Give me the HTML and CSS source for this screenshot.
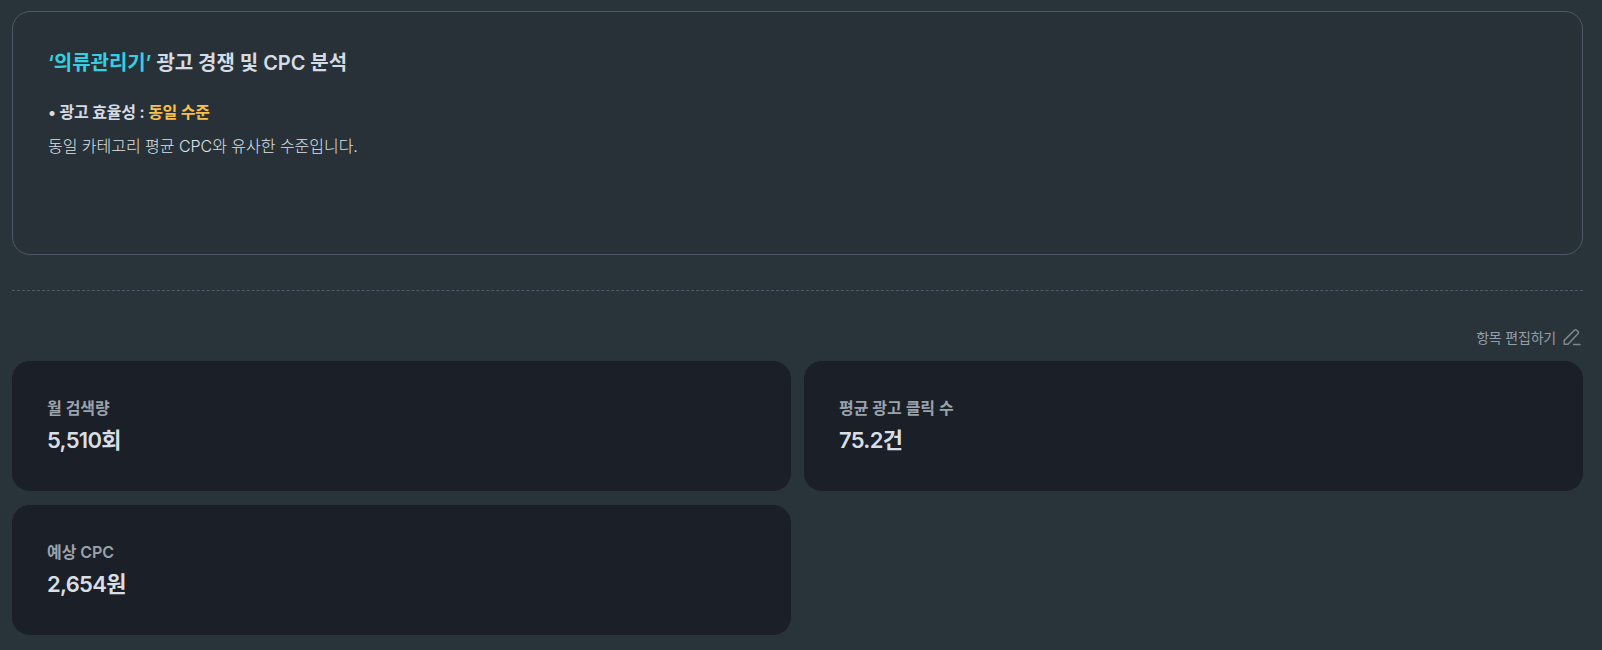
FILE: index.html
```html
<!DOCTYPE html>
<html lang="ko">
<head>
  <meta charset="UTF-8" />
  <title>광고 경쟁 및 CPC 분석</title>
  <link rel="stylesheet" href="styles.css">
</head>
<body>
  <div class="container">
    <div class="analysis-box">
      <h2><em>‘의류관리기’</em> 광고 경쟁 및 CPC 분석</h2>
      <p class="point">• 광고 효율성 : <span>동일 수준</span></p>
      <p class="desc">동일 카테고리 평균 CPC와 유사한 수준입니다.</p>
    </div>

    <div class="divider"></div>

    <div class="edit-row">
      <span>항목 편집하기</span>
      <svg class="edit-icon" width="18" height="18" viewBox="0 0 18 18" fill="none" stroke="#7d8790" stroke-width="1.5" stroke-linecap="round" stroke-linejoin="round">
        <path d="M1.2 16.2V12.4L11.4 2.2a1.6 1.6 0 0 1 2.3 0l1.2 1.2a1.6 1.6 0 0 1 0 2.3L5 16.2Z"/>
        <path d="M10.6 16.4h6.4"/>
      </svg>
    </div>

    <div class="cards">
      <div class="card">
        <div class="label">월 검색량</div>
        <div class="value">5,510회</div>
      </div>
      <div class="card">
        <div class="label">평균 광고 클릭 수</div>
        <div class="value">75.2건</div>
      </div>
      <div class="card">
        <div class="label">예상 CPC</div>
        <div class="value">2,654원</div>
      </div>
    </div>
  </div>
</body>
</html>
```

FILE: styles.css
```css
body {
  margin: 0;
  padding: 0;
  background-color: #29333a;
  font-family: 'Inter', 'Noto Sans CJK KR', sans-serif;
  color: #d9dee5;
}

.container {
  padding: 11px 19px 16px 12px;
}

.analysis-box {
  box-sizing: border-box;
  height: 244px;
  padding: 36px 35px;
  border: 1px solid #4d5966;
  border-radius: 18px;
  background-color: #283138;
}

h2 {
  margin: 0 0 22px;
  font-size: 20px;
  line-height: 30px;
  font-weight: 600;
  letter-spacing: -0.05px;
  color: #d5dbe3;
}

h2 em {
  font-style: normal;
  color: #35d0e0;
}

.point {
  margin: 0 0 9px;
  font-size: 16px;
  line-height: 24px;
  font-weight: 600;
  letter-spacing: -0.25px;
  color: #d5dbe3;
}

.point span {
  color: #f7c04a;
}

.desc {
  margin: 0;
  font-size: 16px;
  line-height: 26px;
  font-weight: 300;
  letter-spacing: -0.03px;
  color: #dde2e8;
}

.divider {
  margin-top: 35px;
  border-top: 1px dashed #4d5966;
}

.edit-row {
  display: flex;
  justify-content: flex-end;
  align-items: center;
  gap: 7px;
  margin-top: 36px;
  padding-right: 2px;
  height: 20px;
  font-size: 14px;
  letter-spacing: -0.2px;
  color: #969fa8;
}

.cards {
  display: grid;
  grid-template-columns: 1fr 1fr;
  gap: 14px 13px;
  margin-top: 14px;
}

.card {
  box-sizing: border-box;
  height: 130px;
  padding: 35px 35px;
  border-radius: 18px;
  background-color: #1b1f27;
}

.label {
  font-size: 16px;
  line-height: 24px;
  font-weight: 600;
  letter-spacing: -0.05px;
  color: #9aa2ac;
}

.value {
  margin-top: 5px;
  font-size: 22px;
  line-height: 30px;
  font-weight: 600;
  letter-spacing: -0.7px;
  color: #d9dee5;
}
```
